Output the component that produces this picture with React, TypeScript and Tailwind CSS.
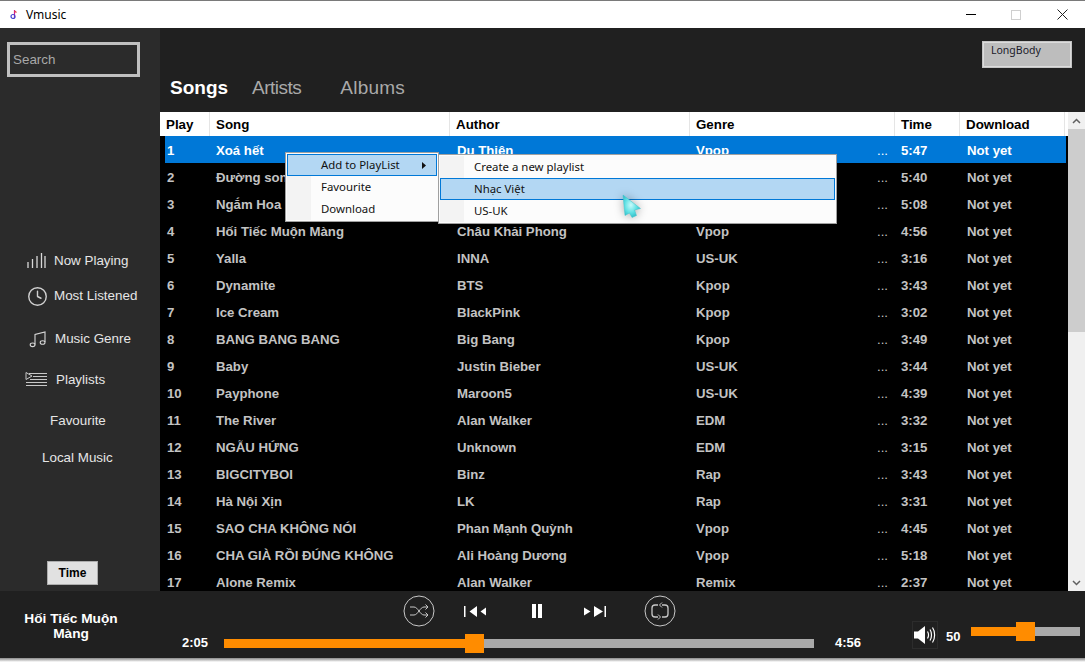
import { Clock } from "lucide-react";

type Song = { song: string; author: string; genre: string; time: string };

const songs: Song[] = [
  { song: "Xoá hết", author: "Du Thiện", genre: "Vpop", time: "5:47" },
  { song: "Đường son", author: "", genre: "", time: "5:40" },
  { song: "Ngắm Hoa", author: "", genre: "", time: "5:08" },
  { song: "Hối Tiếc Muộn Màng", author: "Châu Khải Phong", genre: "Vpop", time: "4:56" },
  { song: "Yalla", author: "INNA", genre: "US-UK", time: "3:16" },
  { song: "Dynamite", author: "BTS", genre: "Kpop", time: "3:43" },
  { song: "Ice Cream", author: "BlackPink", genre: "Kpop", time: "3:02" },
  { song: "BANG BANG BANG", author: "Big Bang", genre: "Kpop", time: "3:49" },
  { song: "Baby", author: "Justin Bieber", genre: "US-UK", time: "3:44" },
  { song: "Payphone", author: "Maroon5", genre: "US-UK", time: "4:39" },
  { song: "The River", author: "Alan Walker", genre: "EDM", time: "3:32" },
  { song: "NGẪU HỨNG", author: "Unknown", genre: "EDM", time: "3:15" },
  { song: "BIGCITYBOI", author: "Binz", genre: "Rap", time: "3:43" },
  { song: "Hà Nội Xịn", author: "LK", genre: "Rap", time: "3:31" },
  { song: "SAO CHA KHÔNG NÓI", author: "Phan Mạnh Quỳnh", genre: "Vpop", time: "4:45" },
  { song: "CHA GIÀ RỒI ĐÚNG KHÔNG", author: "Ali Hoàng Dương", genre: "Vpop", time: "5:18" },
  { song: "Alone Remix", author: "Alan Walker", genre: "Remix", time: "2:37" },
];

function BarsIcon() {
  return (
    <svg width="20" height="20" viewBox="0 0 20 20" stroke="#d8d8d8" strokeWidth="1.3">
      <path d="M2 11v6M6.5 8v9M11 5v12M15.500 2v15M19 5v12" />
    </svg>
  );
}

function NoteIcon() {
  return (
    <svg width="18" height="18" viewBox="0 0 18 18" fill="none" stroke="#d8d8d8" strokeWidth="1.1">
      <path d="M6 14.500V4.500L16 2v10" />
      <ellipse cx="3.600" cy="14.800" rx="2.400" ry="1.800" />
      <ellipse cx="13.600" cy="12.500" rx="2.400" ry="1.800" />
    </svg>
  );
}

function PlaylistIcon() {
  return (
    <svg width="23" height="16" viewBox="0 0 23 16" fill="none" stroke="#c8c8c8" strokeWidth="1">
      <path d="M1 .5l6 3.500-6 3.500z" />
      <path d="M4 1.500h18M8 4.500h14M5 7.500h17M1 10.500h21M1 13.500h21" />
    </svg>
  );
}

function ShuffleIcon() {
  return (
    <svg width="32" height="32" viewBox="0 0 32 32" fill="none" stroke="#c8c8c8" strokeWidth="1">
      <circle cx="16" cy="16" r="15" />
      <path d="M7 12h4c4 0 6 8 10 8h4M7 20h4c4 0 6-8 10-8h4M22.500 9.500l2.500 2.500-2.500 2.500M22.500 17.500l2.500 2.500-2.500 2.500" />
    </svg>
  );
}

function RepeatIcon() {
  return (
    <svg width="32" height="32" viewBox="0 0 32 32" fill="none" stroke="#c8c8c8" strokeWidth="1">
      <circle cx="16" cy="16" r="15" />
      <path d="M14 10h-3a3 3 0 0 0-3 3v6a3 3 0 0 0 3 3h3M18 22h3a3 3 0 0 0 3-3v-6a3 3 0 0 0-3-3h-3" strokeWidth="1.300" />
      <path d="M18 7.500L15.500 10l2.500 2.500M14 19.500l2.500 2.500-2.500 2.500" />
    </svg>
  );
}

function PrevIcon() {
  return (
    <svg width="22" height="11" viewBox="0 0 22 11" fill="#fff">
      <rect x="0" y="0" width="1.500" height="11" />
      <path d="M5.500 5.500L13 0v11zM16.500 5.500L22 1.500v8z" />
    </svg>
  );
}

function NextIcon() {
  return (
    <svg width="22" height="11" viewBox="0 0 22 11" fill="#fff">
      <rect x="20.500" y="0" width="1.500" height="11" />
      <path d="M19 5.500L10 0v11zM6.500 5.500L0 1.500v8z" />
    </svg>
  );
}

function VolumeIcon() {
  return (
    <svg width="24" height="20" viewBox="0 0 24 20" fill="none" stroke="#fff">
      <path d="M1 6.500h4L12 1v18l-7-5.500H1z" fill="#fff" stroke="none" />
      <path d="M14.500 6.500c1.200 2 1.200 5 0 7M17 4.500c2 3 2 8 0 11M19.500 2.500c2.800 4 2.800 11 0 15" strokeWidth="1.200" />
    </svg>
  );
}

function Cursor() {
  return (
    <svg width="22" height="26" viewBox="0 0 22 26">
      <defs>
        <radialGradient id="cursorFill" cx="0.45" cy="0.45" r="0.6">
          <stop offset="0" stopColor="#c8fbfb" />
          <stop offset="0.6" stopColor="#5adfe2" />
          <stop offset="1" stopColor="#2fb4c0" />
        </radialGradient>
      </defs>
      <path d="M2 1l17.500 13.500-6 1.500 2 5.500-4.500 2-2.500-4.500-4.500 2.500z" fill="url(#cursorFill)" stroke="#3dc4cc" strokeWidth="0.500" />
    </svg>
  );
}

function NavItem({ icon, label, className }: { icon?: React.ReactNode; label: string; className: string }) {
  return (
    <div className={`flex items-center h-6 text-[13.4px] text-[#e6e6e6] ${className}`}>
      {icon}
      <span className="pt-px">{label}</span>
    </div>
  );
}

const headCell = "flex items-center pl-[6px] pt-[2px] border-r border-[#e5e5e5]";

export default function App() {
  return (
    <div className="relative w-[1085px] h-[662px] overflow-hidden bg-white font-['Liberation_Sans',Arial,sans-serif]">
      {/* title bar */}
      <div className="h-[28px] flex items-center bg-white border-t border-[#7a7a7a]">
        <svg className="ml-[10px]" width="8" height="10" viewBox="0 0 8 10" fill="none" strokeWidth="1.200">
          <path d="M4.500 0v8" stroke="#d02090" />
          <circle cx="3" cy="6.500" r="2" stroke="#4040d0" />
          <path d="M4.500 1l2 1.500" stroke="#e04040" />
        </svg>
        <span className="ml-[8px] text-[12px] font-['Noto_Sans',sans-serif] text-black">Vmusic</span>
        <div className="ml-auto flex items-center">
          <div className="w-[10px] h-px bg-black mr-[35px]" />
          <div className="w-[10px] h-[10px] border border-[#cfcfcf] mr-[36px]" />
          <svg className="mr-[17px]" width="11" height="11" viewBox="0 0 11 11" stroke="#222" strokeWidth="1">
            <path d="M.5.5l10 10M10.500.5l-10 10" />
          </svg>
        </div>
      </div>

      <div className="flex h-[563px]">
        {/* sidebar */}
        <aside className="w-[160px] shrink-0 flex flex-col bg-[#2b2b2b] pt-[14px]">
          <div className="ml-[7px] w-[133px] h-[35px] border-[3px] border-[#c0c0c0] flex items-center pl-[3px] pt-[2px] text-[13.4px] text-[#a8a8a8]">
            Search
          </div>
          <NavItem
            className="mt-[172px] pl-[26px]"
            icon={<span className="w-[28px]"><BarsIcon /></span>}
            label="Now Playing"
          />
          <NavItem
            className="mt-[11px] pl-[27px]"
            icon={<Clock className="w-[21px] h-[21px] mr-[6px] text-[#d0d0d0]" strokeWidth={1.600} />}
            label="Most Listened"
          />
          <NavItem
            className="mt-[19px] pl-[29px]"
            icon={<span className="w-[26px]"><NoteIcon /></span>}
            label="Music Genre"
          />
          <NavItem
            className="mt-[17px] pl-[25px]"
            icon={<span className="w-[31px]"><PlaylistIcon /></span>}
            label="Playlists"
          />
          <NavItem className="mt-[17px] pl-[50px]" label="Favourite" />
          <NavItem className="mt-[13px] pl-[42px]" label="Local Music" />
          <button className="mt-auto mb-[6px] ml-[47px] w-[51px] h-[24px] bg-[#e1e1e1] border border-[#adadad] text-[12px] font-bold text-black">
            Time
          </button>
        </aside>

        {/* main */}
        <main className="flex-1 min-w-0 flex flex-col bg-[#202020]">
          <div className="h-[84px] shrink-0 relative flex items-end pl-[10px] pb-[11px] text-[19px] leading-[26px]">
            <span className="font-bold text-white">Songs</span>
            <span className="ml-[24px] text-[#a9a9a9] tracking-[-0.5px]">Artists</span>
            <span className="ml-[39px] text-[#a9a9a9] tracking-[0.2px]">Albums</span>
            <div className="absolute left-[822px] top-[13px] w-[90px] h-[27px] bg-[#bdbdbd] border-[2px] border-[#dcdcdc] outline outline-1 outline-[#c4c4c4] -outline-offset-1 pl-[7px] text-[10.5px] leading-[14px] font-['Noto_Sans',sans-serif] text-[#1a1a2a]">
              LongBody
            </div>
          </div>

          <div className="flex-1 min-h-0 flex">
            <div className="flex-1 min-w-0 flex flex-col bg-black">
              <div className="h-[24px] shrink-0 grid grid-cols-[50px_240px_240px_205px_65px_105px_3px] bg-white text-[13.33px] font-bold text-black">
                <div className={headCell}>Play</div>
                <div className={headCell}>Song</div>
                <div className={headCell}>Author</div>
                <div className={headCell}>Genre</div>
                <div className={headCell}>Time</div>
                <div className={headCell}>Download</div>
                <div />
              </div>
              <div className="flex-1 min-h-0 overflow-hidden pl-[5px]">
                {songs.map((s, i) => (
                  <div
                    key={i}
                    className={`h-[27px] pt-[2px] w-[901px] grid grid-cols-[45px_240px_240px_205px_65px_106px] items-center text-[13.2px] font-bold ${
                      i === 0 ? "bg-[#0078d7] text-white" : "text-[#c3c3c3]"
                    }`}
                  >
                    <div className="pl-[2px]">{i + 1}</div>
                    <div className="pl-[6px] whitespace-nowrap">{s.song}</div>
                    <div className="pl-[7px]">{s.author}</div>
                    <div className="pl-[6px] pr-[7px] flex justify-between">
                      <span>{s.genre}</span>
                      <span className="font-normal">...</span>
                    </div>
                    <div className="pl-[6px]">{s.time}</div>
                    <div className="pl-[7px]">Not yet</div>
                  </div>
                ))}
              </div>
            </div>

            {/* scrollbar */}
            <div className="w-[17px] shrink-0 flex flex-col bg-[#f0f0f0]">
              <div className="h-[17px] flex items-center justify-center">
                <svg width="9" height="6" viewBox="0 0 9 6" fill="none" stroke="#606060" strokeWidth="1.500">
                  <path d="M1 5l3.500-3.500L8 5" />
                </svg>
              </div>
              <div className="h-[203px] bg-[#cdcdcd]" />
              <div className="mt-auto h-[17px] flex items-center justify-center">
                <svg width="9" height="6" viewBox="0 0 9 6" fill="none" stroke="#606060" strokeWidth="1.500">
                  <path d="M1 1l3.500 3.500L8 1" />
                </svg>
              </div>
            </div>
          </div>
        </main>
      </div>

      {/* player */}
      <footer className="h-[67px] flex bg-[#202020] text-white font-bold text-[13px]">
        <div className="w-[142px] shrink-0 pt-[20px] text-center leading-[15px] text-[13.7px]">
          Hối Tiếc Muộn
          <br />
          Màng
        </div>
        <div className="w-[719px] shrink-0 flex flex-col">
          <div className="h-[40px] flex items-center pl-[261px]">
            <ShuffleIcon />
            <span className="ml-[29px]"><PrevIcon /></span>
            <div className="ml-[46px] flex gap-[2px]">
              <div className="w-[4px] h-[14px] bg-white" />
              <div className="w-[4px] h-[14px] bg-white" />
            </div>
            <span className="ml-[42px]"><NextIcon /></span>
            <span className="ml-[38px]"><RepeatIcon /></span>
          </div>
          <div className="flex items-center h-[24px] pl-[40px]">
            <span className="w-[42px]">2:05</span>
            <div className="relative w-[590px] h-[9px] bg-[#a9a9a9]">
              <div className="h-full w-[241px] bg-[#ff8c00]" />
              <div className="absolute left-[241px] top-[-5px] w-[19px] h-[19px] bg-[#ff8c00]" />
            </div>
            <span className="ml-[21px]">4:56</span>
          </div>
        </div>
        <div className="flex-1 flex items-start">
          <div className="ml-[51px] mt-[30px] w-[26px] h-[28px] flex items-center justify-center border border-[#2c2c2c]">
            <VolumeIcon />
          </div>
          <span className="ml-[8px] mt-[38px] leading-[15px]">50</span>
          <div className="relative ml-[11px] mt-[36px] w-[109px] h-[9px] bg-[#a9a9a9]">
            <div className="h-full w-[45px] bg-[#ff8c00]" />
            <div className="absolute left-[45px] top-[-5px] w-[19px] h-[19px] bg-[#ff8c00]" />
          </div>
        </div>
      </footer>
      <div className="h-[4px] bg-gradient-to-b from-[#8a8a8a] to-white" />

      {/* context menu */}
      <div className="absolute left-[285px] top-[152px] w-[154px] h-[70px] bg-[#fcfcfc] border border-[#a0a0a0] p-px text-[11.4px] text-[#111] font-['Noto_Sans',sans-serif]">
        <div className="absolute left-px top-px bottom-px w-[24px] bg-[#f3f3f3]" />
        <div className="relative h-[22px] flex items-center pl-[33px] bg-[#b3d7f3] border border-[#0078d7]">
          Add to PlayList
          <svg className="absolute right-[10px]" width="4" height="7" viewBox="0 0 4 7" fill="#111">
            <path d="M0 0l4 3.500L0 7z" />
          </svg>
        </div>
        <div className="relative h-[22px] flex items-center pl-[34px]">Favourite</div>
        <div className="relative h-[22px] flex items-center pl-[34px]">Download</div>
      </div>

      <div className="absolute left-[438px] top-[154px] w-[399px] h-[70px] bg-[#fcfcfc] border border-[#a0a0a0] p-px text-[11.4px] text-[#111] font-['Noto_Sans',sans-serif]">
        <div className="absolute left-px top-px bottom-px w-[24px] bg-[#f3f3f3]" />
        <div className="relative h-[22px] flex items-center pl-[34px]">Create a new playlist</div>
        <div className="relative h-[22px] flex items-center pl-[33px] bg-[#b3d7f3] border border-[#0078d7]">Nhạc Việt</div>
        <div className="relative h-[22px] flex items-center pl-[34px]">US-UK</div>
      </div>

      {/* mouse pointer over the menu */}
      <div className="absolute left-[621px] top-[194px] drop-shadow-[0_0_5px_rgba(0,0,0,0.35)]">
        <Cursor />
      </div>
    </div>
  );
}
